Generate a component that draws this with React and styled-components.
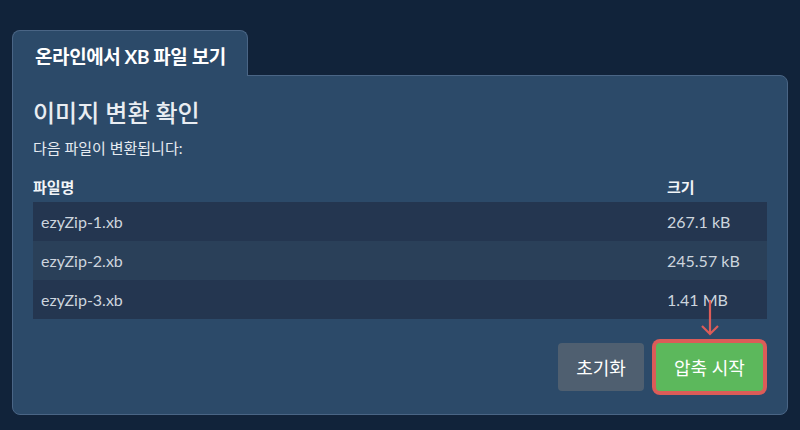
import styled, { createGlobalStyle } from 'styled-components';

const GlobalStyle = createGlobalStyle`
  html, body {
    margin: 0;
    padding: 0;
    background: #11233a;
  }
  body {
    font-family: Lato, "Noto Sans CJK KR", sans-serif;
    color: #e6ebf1;
  }
`;

const Page = styled.div`
  width: 800px;
  height: 430px;
  box-sizing: border-box;
  padding: 30px 12px 0;
  background: #11233a;
`;

const Tab = styled.div`
  display: inline-flex;
  align-items: center;
  height: 46px;
  box-sizing: border-box;
  padding: 3px 0 0 22px;
  width: 236px;
  background: #2c4a69;
  border: 1px solid #4a6585;
  border-bottom: none;
  border-radius: 8px 8px 0 0;
  font-size: 19px;
  font-weight: 700;
  color: #ffffff;
  letter-spacing: -0.4px;
  position: relative;
  z-index: 1;
  margin-bottom: -1px;
`;

const Panel = styled.div`
  background: #2c4a69;
  border: 1px solid #4a6585;
  border-radius: 0 8px 8px 8px;
  padding: 22px 20px 22px;
  height: 340px;
  box-sizing: border-box;
`;

const Title = styled.h2`
  margin: 0;
  font-size: 24px;
  font-weight: 500;
  color: #e9edf2;
  line-height: 30px;
`;

const Subtitle = styled.p`
  margin: 9px 0 0;
  font-size: 15px;
  line-height: 22px;
  color: #e6ebf1;
`;

const Table = styled.table`
  width: 100%;
  margin-top: 18px;
  border-collapse: collapse;
`;

const HeadCell = styled.th`
  text-align: left;
  font-size: 15px;
  font-weight: 700;
  padding: 0 0 5px ${({ $pad }) => ($pad ? '8px' : '0')};
  height: 20px;
  line-height: 20px;
  color: #f2f5f8;
  width: ${({ $width }) => $width || 'auto'};
`;

const Row = styled.tr`
  background: ${({ $alt }) => ($alt ? '#2a4059' : '#243650')};
`;

const Cell = styled.td`
  height: 39px;
  padding: 0 8px;
  color: #cdd5de;
  font-size: 16px;
`;

const Actions = styled.div`
  display: flex;
  justify-content: flex-end;
  gap: 12px;
  margin-top: 24px;
  padding-right: 4px;
`;

const Button = styled.button`
  height: 48px;
  padding: 0;
  border: none;
  border-radius: 4px;
  font-family: inherit;
  font-size: 18px;
  color: #ffffff;
  background: ${({ $variant }) => ($variant === 'primary' ? '#5cb85c' : '#4f5f70')};
  width: ${({ $width }) => $width};
  position: relative;
  box-shadow: ${({ $highlight }) => ($highlight ? '0 0 0 4px #dc5c58' : 'none')};
  cursor: pointer;
`;

const ArrowMark = styled.svg`
  position: absolute;
  left: 50%;
  bottom: 100%;
  margin-bottom: 7px;
  transform: translateX(-50%);
  overflow: visible;
`;

const FILES = [
  { name: 'ezyZip-1.xb', size: '267.1 kB' },
  { name: 'ezyZip-2.xb', size: '245.57 kB' },
  { name: 'ezyZip-3.xb', size: '1.41 MB' },
];

export default function App() {
  return (
    <>
      <GlobalStyle />
      <Page>
        <Tab>온라인에서 XB 파일 보기</Tab>
        <Panel>
          <Title>이미지 변환 확인</Title>
          <Subtitle>다음 파일이 변환됩니다:</Subtitle>
          <Table>
            <thead>
              <tr>
                <HeadCell>파일명</HeadCell>
                <HeadCell $pad $width="100px">크기</HeadCell>
              </tr>
            </thead>
            <tbody>
              {FILES.map((f, i) => (
                <Row key={f.name} $alt={i % 2 === 1}>
                  <Cell>{f.name}</Cell>
                  <Cell>{f.size}</Cell>
                </Row>
              ))}
            </tbody>
          </Table>
          <Actions>
            <Button $width="86px">초기화</Button>
            <Button $variant="primary" $width="107px" $highlight>
              압축 시작
              <ArrowMark width="20" height="36" viewBox="0 0 20 36">
                <path d="M10 0 V34 M2 26 L10 34 L18 26" fill="none" stroke="#dc5c58" strokeWidth="2.2" />
              </ArrowMark>
            </Button>
          </Actions>
        </Panel>
      </Page>
    </>
  );
}
